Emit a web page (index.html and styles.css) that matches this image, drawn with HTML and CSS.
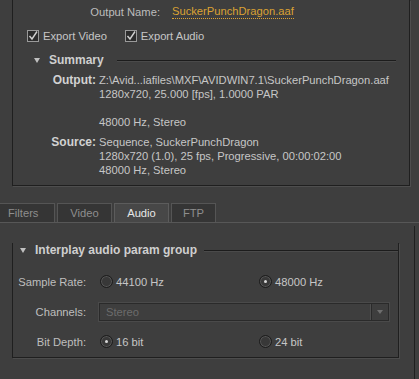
FILE: index.html
```html
<!DOCTYPE html>
<html lang="en">
<head>
  <meta charset="UTF-8">
  <title>Export Settings</title>
  <link rel="stylesheet" href="styles.css">
</head>
<body>
  <div class="top-panel">
    <div class="name-row">
      <span class="name-label">Output Name:</span>
      <span class="name-link">SuckerPunchDragon.aaf</span>
    </div>

    <div class="check-row">
      <label class="check"><span class="box"><svg width="10" height="10" viewBox="0 0 10 10"><path d="M1.5 5 L4 8 L9 0.5" fill="none" stroke="#d0d0d0" stroke-width="1.4"/></svg></span>Export Video</label>
      <label class="check"><span class="box"><svg width="10" height="10" viewBox="0 0 10 10"><path d="M1.5 5 L4 8 L9 0.5" fill="none" stroke="#d0d0d0" stroke-width="1.4"/></svg></span>Export Audio</label>
    </div>

    <div class="section-head summary-head">
      <span class="tri"></span>
      <span class="section-title">Summary</span>
      <span class="rule"></span>
    </div>

    <div class="summary">
      <div class="sum-label">Output:</div>
      <div class="sum-value">
        <div>Z:\Avid...iafiles\MXF\AVIDWIN7.1\SuckerPunchDragon.aaf</div>
        <div>1280x720, 25.000 [fps], 1.0000 PAR</div>
        <div>&nbsp;</div>
        <div>48000 Hz, Stereo</div>
      </div>
      <div class="sum-label">Source:</div>
      <div class="sum-value">
        <div>Sequence, SuckerPunchDragon</div>
        <div>1280x720 (1.0), 25 fps, Progressive, 00:00:02:00</div>
        <div>48000 Hz, Stereo</div>
      </div>
    </div>
  </div>

  <div class="tabs">
    <div class="tab tab-first">Filters</div>
    <div class="tab">Video</div>
    <div class="tab active">Audio</div>
    <div class="tab">FTP</div>
  </div>

  <div class="lower-panel">
    <div class="group">
      <div class="section-head group-head">
        <span class="tri"></span>
        <span class="section-title">Interplay audio param group</span>
        <span class="rule"></span>
      </div>

      <div class="form">
        <div class="f-label">Sample Rate:</div>
        <label class="radio"><span class="dot"></span>44100 Hz</label>
        <label class="radio"><span class="dot on"></span>48000 Hz</label>

        <div class="f-label">Channels:</div>
        <div class="select">
          <span class="select-text">Stereo</span>
          <span class="select-btn"></span>
        </div>

        <div class="f-label">Bit Depth:</div>
        <label class="radio"><span class="dot on"></span>16 bit</label>
        <label class="radio"><span class="dot"></span>24 bit</label>
      </div>
    </div>
  </div>
</body>
</html>
```

FILE: styles.css
```css
body {
  margin: 0;
  padding: 0;
  width: 419px;
  height: 379px;
  overflow: hidden;
  background: #3e3e3e;
  color: #c6c6c6;
  font-family: "Liberation Sans", Arial, sans-serif;
  font-size: 11.2px;
  line-height: 14px;
}

.top-panel {
  margin-left: 12px;
  width: 398px;
  height: 186px;
  box-sizing: border-box;
  border: 1px solid #1f1f1f;
  border-top: none;
  box-shadow: 1px 1px 0 #4e4e4e;
}

.name-row {
  display: flex;
  padding-top: 5px;
}

.name-label {
  width: 147px;
  text-align: right;
  color: #bdbdbd;
}

.name-link {
  margin-left: 12px;
  color: #dba233;
  border-bottom: 1px dotted #dba233;
  line-height: 13px;
}

.check-row {
  display: flex;
  gap: 18px;
  margin-top: 10px;
  padding-left: 14px;
}

.check {
  display: flex;
  align-items: center;
  gap: 4px;
}

.box {
  width: 10px;
  height: 10px;
  border: 1px solid #9a9a9a;
  background: #2c2c2c;
  display: flex;
}

.section-head {
  display: flex;
  align-items: center;
  height: 14px;
}

.summary-head {
  margin-top: 10px;
  padding-left: 21px;
  padding-right: 13px;
}

.tri {
  width: 0;
  height: 0;
  border-left: 3.5px solid transparent;
  border-right: 3.5px solid transparent;
  border-top: 5px solid #c0c0c0;
  margin-right: 9px;
}

.section-title {
  font-weight: bold;
  font-size: 12px;
  color: #cfcfcf;
}

.rule {
  flex: 1;
  height: 1px;
  background: #1c1c1c;
  box-shadow: 0 1px 0 #4a4a4a;
  margin-left: 13px;
}

.summary {
  display: grid;
  grid-template-columns: 83px 1fr;
  column-gap: 3px;
  row-gap: 6px;
  margin-top: 6px;
}

.sum-label {
  text-align: right;
  font-weight: bold;
  font-size: 12px;
  color: #d2d2d2;
}

.tabs {
  display: flex;
  gap: 2px;
  margin-top: 17px;
  height: 19px;
  border-bottom: 1px solid #575757;
}

.tab {
  width: 55px;
  height: 19px;
  box-sizing: border-box;
  border: 1px solid #555555;
  border-bottom: none;
  background: #353535;
  color: #8e8e8e;
  text-align: center;
  line-height: 19px;
}

.tab-first {
  margin-left: -1px;
  width: 56px;
  text-align: left;
  padding-left: 8px;
}

.tab:last-child {
  width: 45px;
}

.tab.active {
  background: #474747;
  color: #e6e6e6;
  border-color: #5c5c5c;
}

.lower-panel {
  width: 415px;
  box-sizing: border-box;
  border-right: 1px solid #1f1f1f;
  margin-top: 3px;
  padding-top: 24px;
  height: 160px;
}

.group {
  margin-left: 12px;
  width: 387px;
  height: 115px;
  box-sizing: border-box;
  border: 1px solid #1f1f1f;
  border-top: none;
  box-shadow: 1px 1px 0 #4c4c4c;
}

.group-head {
  margin-top: -7px;
  padding-left: 7px;
}

.group-head .rule {
  margin-left: 7px;
}

.form {
  display: grid;
  grid-template-columns: 73px 145px 1fr;
  column-gap: 14px;
  align-items: center;
  grid-auto-rows: 19px;
  row-gap: 11px;
  margin-top: 15px;
}

.f-label {
  text-align: right;
  color: #bfbfbf;
}

.radio {
  display: flex;
  align-items: center;
  gap: 3px;
}

.dot {
  width: 11px;
  height: 11px;
  border: 1px solid #1c1c1c;
  border-radius: 50%;
  background: #383838;
  box-shadow: 0 0 0 1px #555555 inset;
  display: flex;
  align-items: center;
  justify-content: center;
}

.dot.on::after {
  content: "";
  width: 3px;
  height: 3px;
  border-radius: 50%;
  background: #d8d8d8;
}

.select {
  grid-column: 2 / 4;
  margin-left: -1px;
  margin-right: 9px;
  height: 18px;
  box-sizing: border-box;
  border: 1px solid #2a2a2a;
  box-shadow: 0 0 0 1px #4a4a4a;
  display: flex;
  align-items: center;
}

.select-text {
  flex: 1;
  padding-left: 6px;
  color: #6c6c6c;
}

.select-btn {
  width: 16px;
  height: 16px;
  border-left: 1px solid #2a2a2a;
  box-shadow: -1px 0 0 #4e4e4e;
  display: flex;
  align-items: center;
  justify-content: center;
}

.select-btn::after {
  content: "";
  border-left: 3.5px solid transparent;
  border-right: 3.5px solid transparent;
  border-top: 4px solid #6e6e6e;
}
```
